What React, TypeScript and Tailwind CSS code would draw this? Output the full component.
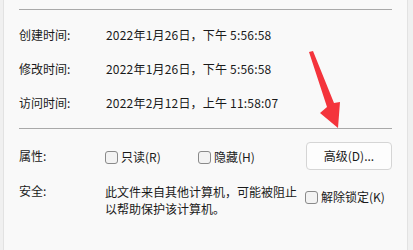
import React from "react";

const font = { fontFamily: '"Microsoft YaHei UI", "Noto Sans CJK SC", "Noto Sans", sans-serif' };

function Box() {
  return <span className="inline-block w-[13px] h-[13px] rounded-[3px] border border-[#8a8a8a] bg-[#f3f3f3] shrink-0" />;
}

export default function App() {
  return (
    <div className="w-[413px] h-[250px] bg-[#f0f0f0] flex text-[12px] text-[#1a1a1a] relative overflow-hidden" style={font}>
      <div className="w-[4px] bg-[#f0f0f0] border-r border-[#e2e2e2]" />
      <div className="flex-1 bg-[#f9f9f9] pl-[15px] pr-[15px]">
        <div className="h-[10px] border-b border-[#a9a9a9]" />
        <div className="flex flex-col">
          <div className="flex items-center h-[34px] mt-[8px]">
            <span className="w-[87px]">创建时间:</span>
            <span className="tracking-[0.2px]">2022年1月26日，下午 5:56:58</span>
          </div>
          <div className="flex items-center h-[34px]">
            <span className="w-[87px]">修改时间:</span>
            <span className="tracking-[0.2px]">2022年1月26日，下午 5:56:58</span>
          </div>
          <div className="flex items-center h-[34px]">
            <span className="w-[87px]">访问时间:</span>
            <span className="tracking-[0.2px]">2022年2月12日，上午 11:58:07</span>
          </div>
        </div>
        <div className="h-[9px] border-b border-[#a9a9a9]" />
        <div className="flex items-center mt-[13px] h-[28px]">
          <span className="w-[86px] self-start mt-[5px]">属性:</span>
          <span className="flex items-center gap-[3px] w-[93px] mt-[2px]"><Box />只读(R)</span>
          <span className="flex items-center gap-[3px] w-[108px] mt-[2px]"><Box />隐藏(H)</span>
          <button className="w-[86px] h-[28px] rounded-[4px] border border-[#d5d5d5] bg-[#fdfdfd] text-[12px]" style={font}>高级(D)...</button>
        </div>
        <div className="flex mt-[13px]">
          <span className="w-[86px] leading-[16px]">安全:</span>
          <span className="w-[200px] leading-[17px]">此文件来自其他计算机，可能被阻止以帮助保护该计算机。</span>
          <span className="flex items-center gap-[3px] mt-[7px] h-[14px]"><Box />解除锁定(K)</span>
        </div>
      </div>
      <div className="w-[6px] bg-[#f0f0f0] border-l border-[#e2e2e2]" />
      <svg className="absolute left-0 top-0" width="413" height="250" viewBox="0 0 413 250">
        <polygon points="309,52 313,51 334,103 340,102 338,128 320,113 327,107" fill="#f4343c" />
      </svg>
    </div>
  );
}
